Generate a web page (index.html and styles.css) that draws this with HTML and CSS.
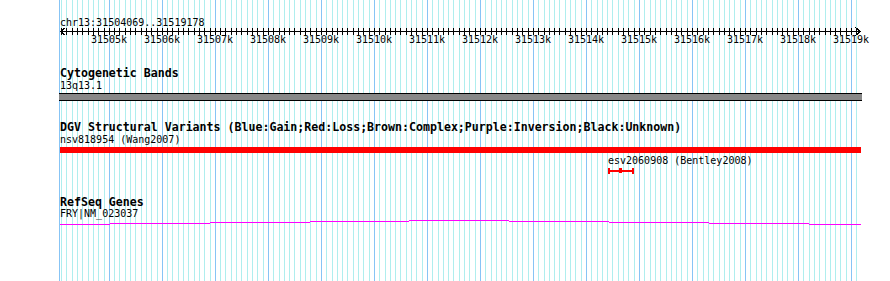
FILE: index.html
```html
<!DOCTYPE html>
<html lang="en">
<head>
  <meta charset="UTF-8">
  <meta name="viewport" content="width=device-width, initial-scale=1.0">
  <title>chr13:31504069..31519178</title>
  <link rel="stylesheet" href="styles.css">
</head>
<body>
  <div class="browser">
    <div class="grid" id="grid"></div>

    <div class="ruler">
      <div class="ruler-title">chr13:31504069..31519178</div>
      <div class="scale" id="scale">
        <svg class="scale-line" id="scale-line" width="801" height="9"></svg>
      </div>
    </div>

    <div class="track cyto">
      <div class="track-title">Cytogenetic Bands</div>
      <div class="feature-label">13q13.1</div>
      <div class="band"></div>
    </div>

    <div class="track dgv">
      <div class="track-title">DGV Structural Variants (Blue:Gain;Red:Loss;Brown:Complex;Purple:Inversion;Black:Unknown)</div>
      <div class="lane">
        <div class="feature-label">nsv818954 (Wang2007)</div>
        <div class="loss-bar"></div>
      </div>
      <div class="lane small-lane">
        <div class="feature" data-start="31514407" data-end="31514897">
          <div class="feature-label">esv2060908 (Bentley2008)</div>
          <svg class="variant" width="26" height="6">
            <rect x="0" y="0" width="2" height="6"/>
            <rect x="24" y="0" width="2" height="6"/>
            <rect x="0" y="2" width="26" height="2"/>
            <rect x="11" y="0" width="3" height="5"/>
          </svg>
        </div>
      </div>
    </div>

    <div class="track refseq">
      <div class="track-title">RefSeq Genes</div>
      <div class="feature-label gene-label">FRY|NM_023037</div>
      <svg class="gene" width="801" height="8">
        <rect x="0" y="5" width="50" height="1"/>
        <rect x="50" y="4" width="100" height="1"/>
        <rect x="150" y="3" width="100" height="1"/>
        <rect x="250" y="2" width="99" height="1"/>
        <rect x="349" y="1" width="100" height="1"/>
        <rect x="449" y="2" width="100" height="1"/>
        <rect x="549" y="3" width="100" height="1"/>
        <rect x="649" y="4" width="100" height="1"/>
        <rect x="749" y="5" width="52" height="1"/>
      </svg>
    </div>
  </div>

  <script>
    const START = 31504069;
    const END = 31519178;
    const WIDTH = 801;
    const scale = WIDTH / (END - START);

    const grid = document.getElementById('grid');
    const scaleBox = document.getElementById('scale');
    const scaleLine = document.getElementById('scale-line');

    function toX(pos) {
      return Math.floor((pos - START) * scale);
    }

    function addGridLine(x, major) {
      const line = document.createElement('div');
      line.classList.add('gridline');
      if (major) line.classList.add('major');
      line.style.left = x + 'px';
      grid.appendChild(line);
    }

    function drawRuler() {
      let ticks = '';
      addGridLine(0, true);
      for (let p = Math.ceil(START / 100) * 100; p <= END; p += 100) {
        const x = toX(p);
        const major = p % 1000 === 0;
        addGridLine(x + 1, major);
        ticks += `M${x + 0.5} 1V8`;
        if (major) {
          const label = document.createElement('div');
          label.classList.add('tick-label');
          label.style.left = (x - 18) + 'px';
          label.textContent = `${p / 1000}k`;
          scaleBox.appendChild(label);
        }
      }
      scaleLine.innerHTML = `
        <path d="M0 4.5H801${ticks}"/>
        <path d="M5.5 0.5L0.5 4.5L5.5 8.5"/>
        <path d="M795.5 0.5L800.5 4.5L795.5 8.5"/>
      `;
    }

    function placeFeatures() {
      document.querySelectorAll('.feature').forEach((feature) => {
        const left = toX(Number(feature.dataset.start));
        const right = toX(Number(feature.dataset.end));
        feature.style.left = left + 'px';
        feature.style.width = (right - left) + 'px';
      });
    }

    drawRuler();
    placeFeatures();
  </script>
</body>
</html>
```

FILE: styles.css
```css
html, body {
  margin: 0;
  padding: 0;
  background-color: #ffffff;
  overflow: hidden;
}

body {
  font-family: 'DejaVu Sans Mono', 'Liberation Mono', monospace;
  font-size: 10px;
  color: #000000;
}

.browser {
  position: relative;
  margin-left: 60px;
  width: 801px;
  height: 281px;
}

.grid {
  position: absolute;
  top: 0;
  left: -1px;
  width: 802px;
  height: 100%;
}

.gridline {
  position: absolute;
  top: 0;
  bottom: 0;
  width: 1px;
  background-color: #afeeee;
}

.gridline.major {
  background-color: #87c4f5;
}

.ruler, .track, .lane {
  position: relative;
}

.ruler {
  padding-top: 17px;
}

.ruler-title {
  height: 12px;
  line-height: 12px;
}

.scale {
  position: relative;
  height: 19px;
  margin-top: -2px;
}

.scale-line {
  display: block;
  fill: none;
  stroke: #000000;
  stroke-width: 1;
  shape-rendering: crispEdges;
}

.tick-label {
  position: absolute;
  top: 7px;
  width: 36px;
  line-height: 12px;
  text-align: center;
}

.track-title {
  font-weight: bold;
  font-size: 11.6px;
  height: 13px;
  line-height: 13px;
  white-space: nowrap;
}

.feature-label {
  height: 12px;
  line-height: 12px;
  white-space: nowrap;
}

.cyto {
  margin-top: 21px;
}

.band {
  margin-top: 1px;
  margin-left: -1px;
  width: 803px;
  height: 6px;
  background-color: #888888;
  border-top: 1px solid #000000;
  border-bottom: 1px solid #000000;
}

.dgv {
  margin-top: 20px;
}

.loss-bar {
  margin-top: 1px;
  width: 801px;
  height: 6px;
  background-color: #ff0000;
}

.small-lane {
  margin-top: 2px;
  height: 19px;
}

.feature {
  position: absolute;
  top: 0;
}

.variant {
  display: block;
  margin-top: 1px;
  fill: #ff0000;
  shape-rendering: crispEdges;
}

.refseq {
  margin-top: 22px;
}

.gene-label {
  margin-top: -1px;
}

.gene {
  display: block;
  margin-top: -1px;
  fill: #ff00ff;
  shape-rendering: crispEdges;
}
```
